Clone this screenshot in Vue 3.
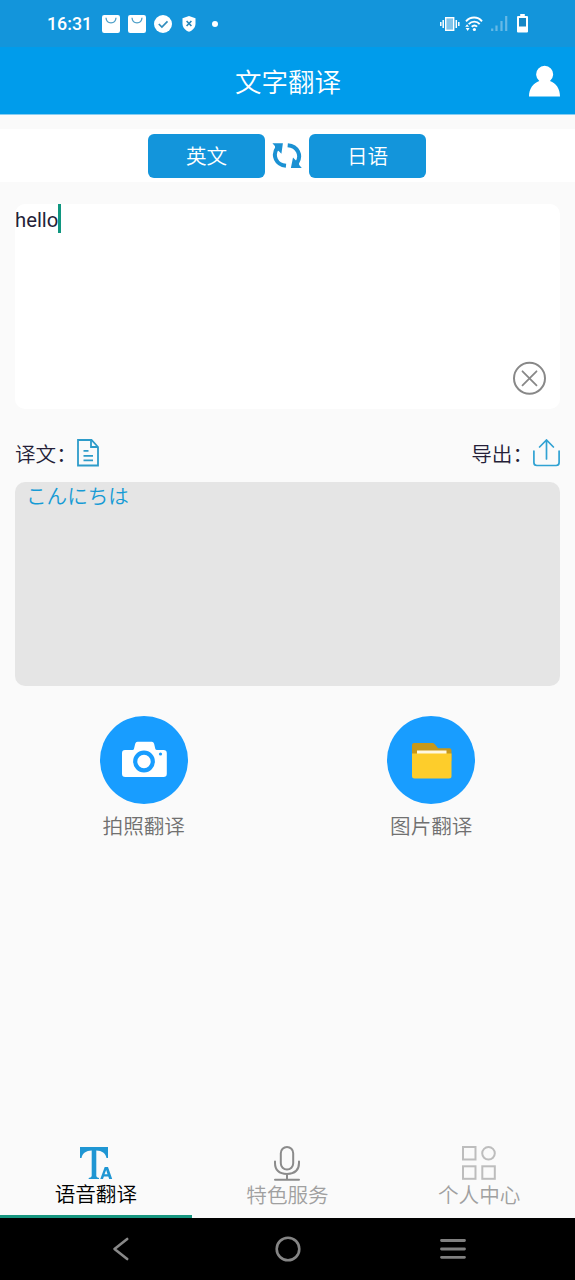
<script setup>
import { ref } from 'vue'

const source = ref('hello')
const result = ref('こんにちは')
const languages = ['英文', '日语']
</script>

<template>
  <main class="screen">
    <div class="status">
      <span class="time">16:31</span>
      <svg v-for="n in 2" :key="n" class="bag" width="18" height="18" viewBox="0 0 18 18">
        <rect width="18" height="18" rx="2.2" fill="#fff" />
        <path d="M4 2.800c.6 6.800 9.400 6.800 10 0" fill="none" stroke="#4d9fc8" stroke-width="1.300" />
      </svg>
      <svg class="check" width="18" height="18" viewBox="0 0 18 18">
        <circle cx="9" cy="9" r="9" fill="#fff" />
        <path d="M4.800 9l3.100 3 5.600-5.700" fill="none" stroke="#328dbd" stroke-width="1.700" />
      </svg>
      <svg class="shield" width="14" height="16" viewBox="0 0 14 16">
        <path d="M7 0l6.500 2.300v5.200c0 4-2.600 6.900-6.500 8.300C3.100 14.400.5 11.500.5 7.500V2.300z" fill="#fff" />
        <path d="M4.600 5l4.800 5M9.400 5l-4.800 5" stroke="#2485b8" stroke-width="1.600" />
      </svg>
      <i class="dot"></i>
      <span class="grow"></span>
      <svg class="vibrate" width="20" height="14" viewBox="0 0 20 14">
        <rect x="5.700" y=".7" width="8" height="12.600" fill="#80c3e9" stroke="#fff" stroke-width="1.400" />
        <path d="M3.200 3v8M16.300 3v8M.8 5v4M18.800 5v4" stroke="#fff" stroke-width="1.500" />
      </svg>
      <svg class="wifi" width="18" height="16" viewBox="0 0 18 16">
        <g fill="none" stroke="#fff" stroke-width="1.900">
          <path d="M1 5.300C5.500.3 12.800.3 17 5.300M3.700 8.100c3.200-3.300 8.100-3.300 11 0M6.700 10.700c1.600-1.500 3.900-1.500 5.400 0" />
        </g>
        <circle cx="9.400" cy="13.500" r="1.600" fill="#fff" />
        <path d="M.2 10.800l1.900-2.500 1.900 2.500zM.7 12l2 3 1.900-3z" fill="#fff" />
      </svg>
      <svg class="signal" width="17" height="16" viewBox="0 0 17 16">
        <path d="M1.200 12.500V15M5.500 9.500V15M10.500 5v10M15.200 0v15" stroke="#66b9e6" stroke-width="2.200" />
      </svg>
      <svg class="battery" width="11" height="19" viewBox="0 0 11 19">
        <path d="M3.200 0h4.600v2H10q1 0 1 1v14.500q0 1-1 1H1q-1 0-1-1V3q0-1 1-1h2.200z" fill="#fff" />
        <rect x="2" y="4" width="7" height="8.500" fill="#1687c5" />
      </svg>
    </div>

    <header class="header">
      <h1>文字翻译</h1>
      <svg class="person" width="32" height="32" viewBox="0 0 32 32">
        <path d="M0 31.500c0-8 4.300-13.500 10.300-15.600A8.500 8.500 0 1 1 21 15.900C27 18 31 23.500 31 31.500z" fill="#fff" />
      </svg>
    </header>

    <div class="languages">
      <button>{{ languages[0] }}</button>
      <svg width="30" height="28" viewBox="0 0 30 28">
        <g fill="none" stroke="#1b91d3" stroke-width="4">
          <path d="M14 23.800C3.900 22.800-.1 13.500 5.400 5.500" />
          <path d="M15.700 3.300C25.900 4.200 30 13.500 24.900 21.500" />
        </g>
        <path d="M.4 1.300h10.500L9.400 11.800 6.700 9 3.400 7.500 2.900 4zM29.800 25.900H18.900L21 15.500l2.700 2.700 3 1.600.5 3.200z" fill="#1b91d3" />
      </svg>
      <button>{{ languages[1] }}</button>
    </div>

    <section class="source">
      <span class="typed">{{ source }}</span><i class="caret"></i>
      <svg class="clear" width="34" height="34" viewBox="0 0 34 34" fill="none" stroke="#888">
        <circle cx="17.500" cy="17.300" r="15.500" stroke-width="2" />
        <path d="M10.500 10.300l14 14M24.500 10.300l-14 14" stroke-width="1.800" stroke-linecap="round" />
      </svg>
    </section>

    <div class="tools">
      <span>译文：</span>
      <svg class="document" width="22" height="28" viewBox="0 0 22 28" fill="none" stroke="#2d9bc9" stroke-width="1.800">
        <path d="M1 1h13.500L21 8v18.500H1z" />
        <path d="M14 1v7h7" />
        <path d="M6.500 11.800h5M6.500 16.800h9.500M6.500 21.300h9.500" />
      </svg>
      <span class="grow"></span>
      <span>导出：</span>
      <svg class="export" width="27" height="28" viewBox="0 0 27 28" fill="none" stroke="#30a2d3" stroke-width="1.700" stroke-linecap="round">
        <path d="M.9 12v11.500q0 3 3 3h19.200q3 0 3-3V12" />
        <path d="M13.500 20V1M6.600 8l6.900-7 6.900 7" />
      </svg>
    </div>

    <section class="result">{{ result }}</section>

    <div class="actions">
      <div class="action">
        <div class="disc">
          <svg width="88" height="88" viewBox="0 0 88 88">
            <path d="M25 34h7.500q1.200 0 1.500-1.200l1.200-5q.6-2 2.300-2h14.300q1.700 0 2.300 2l1.200 5Q55.600 34 57 34h6.500q3.300 0 3.300 3.300v20.400q0 3.300-3.300 3.300H25.300q-3.300 0-3.300-3.300V37.300Q22 34 25 34z" fill="#fff" />
            <circle cx="44" cy="45.500" r="8.800" fill="none" stroke="#189dff" stroke-width="4.200" />
            <circle cx="60.500" cy="38" r="1.600" fill="#189dff" />
          </svg>
        </div>
        <span>拍照翻译</span>
      </div>
      <div class="action">
        <div class="disc">
          <svg width="88" height="88" viewBox="0 0 88 88">
            <path d="M25 29q0-2 2-2h18.500q1.300 0 2.300 1.200l3.300 4h11.400q2 0 2 2V45H25z" fill="#c7981a" />
            <rect x="30" y="34.500" width="29.500" height="7" fill="#fff8e1" />
            <path d="M25 37.500h39.500v22.500q0 2.500-2.500 2.500H27.500Q25 62.500 25 60z" fill="#fdcd2b" />
          </svg>
        </div>
        <span>图片翻译</span>
      </div>
    </div>

    <nav class="tabs">
      <div class="tab active">
        <svg width="34" height="35" viewBox="0 0 34 35" fill="#1f96d3">
          <path d="M1 1h28v11h-1.500C26.500 7 23 4.800 17.300 4.500V30q0 1.700 2.700 2v1H9.700v-1q3-.3 3-2V4.500C7 4.800 3.500 7 2.500 12H1z" />
          <path fill-rule="evenodd" d="M21.300 33l4.400-12h3.300l4.200 12h-3l-.9-2.500h-4.400l-.9 2.500zM25.500 28.300h3L27.200 24z" />
        </svg>
        <span>语音翻译</span>
      </div>
      <div class="tab">
        <svg width="34" height="35" viewBox="0 0 34 35" fill="none" stroke="#8b8b8b" stroke-width="2">
          <rect x="10.800" y="1" width="12.400" height="22.500" rx="6.200" />
          <path d="M5 15.500v1.500q0 10.700 12 11 12-.3 12-11v-1.500M17 28v5.500M5 33.700h24" stroke-linecap="round" />
        </svg>
        <span>特色服务</span>
      </div>
      <div class="tab">
        <svg width="34" height="35" viewBox="0 0 34 35" fill="none" stroke="#bdbdbd" stroke-width="2">
          <rect x="1" y="1" width="12.500" height="12.500" />
          <circle cx="26.500" cy="7.300" r="6.300" />
          <rect x="1" y="20.300" width="12.500" height="12.500" />
          <rect x="20.300" y="20.300" width="12.500" height="12.500" />
        </svg>
        <span>个人中心</span>
      </div>
    </nav>

    <footer class="keys">
      <svg width="18" height="24" viewBox="0 0 18 24" fill="none" stroke="#888" stroke-width="2.600" stroke-linecap="round" stroke-linejoin="round">
        <path d="M15.200 2L2.500 12l12.700 10" />
      </svg>
      <svg class="home" width="26" height="26" viewBox="0 0 26 26" fill="none" stroke="#858585" stroke-width="2.600">
        <circle cx="13" cy="13" r="11.300" />
      </svg>
      <svg width="26" height="22" viewBox="0 0 26 22" stroke="#808080" stroke-width="2.800" stroke-linecap="round">
        <path d="M1.500 2.500h23M1.500 11h23M1.500 19.300h23" />
      </svg>
    </footer>
  </main>
</template>

<style>
body {
  margin: 0;
}
</style>

<style scoped>
.screen {
  display: flex;
  flex-direction: column;
  box-sizing: border-box;
  width: 575px;
  height: 1280px;
  overflow: hidden;
  background: #fafafa;
  color: #251f38;
  font-family: Roboto, "Noto Sans CJK SC", sans-serif;
  font-size: 20.6px;
  font-weight: 350;
}
svg {
  display: block;
  flex: none;
}
.grow {
  flex: 1;
}
.status {
  display: flex;
  align-items: center;
  height: 47px;
  box-sizing: border-box;
  padding: 0 47px;
  background: #1395db;
  color: #fff;
}
.time {
  width: 55px;
  font-size: 17.8px;
  font-weight: 500;
  line-height: 24px;
  padding-top: 1px;
}
.bag {
  margin-right: 8px;
}
.check {
  margin-right: 10px;
}
.dot {
  width: 6px;
  height: 6px;
  margin-left: 16px;
  border-radius: 50%;
  background: #fff;
}
.wifi {
  margin-left: 5px;
}
.signal {
  margin-left: 8px;
}
.battery {
  margin-left: 9px;
}
.header {
  display: grid;
  grid-template-columns: 1fr auto 1fr;
  align-items: center;
  box-sizing: border-box;
  height: 68px;
  padding: 1px 14px 0 15px;
  border-bottom: 1px solid #86cdf2;
  background: #009ceb;
  color: #fff;
}
.header h1 {
  grid-column: 2;
  margin: 0;
  padding-top: 4px;
  font-size: 26.500px;
  font-weight: 350;
  line-height: 40px;
}
.person {
  justify-self: end;
}
.languages {
  display: flex;
  align-items: center;
  justify-content: center;
  gap: 7px;
  box-sizing: border-box;
  height: 53px;
  margin-top: 14px;
  padding: 1px 1px 0 0;
  background: #fff;
}
.languages button {
  width: 117px;
  height: 44px;
  padding: 3px 0 0;
  border: 0;
  border-radius: 6px;
  background: #1395db;
  color: #fff;
  font: inherit;
  line-height: 41px;
}
.source {
  position: relative;
  display: flex;
  height: 205px;
  margin: 22px 15px 0;
  border-radius: 10px;
  background: #fff;
}
.typed {
  width: 43px;
  font-size: 20.3px;
  font-weight: 400;
  line-height: 32px;
}
.caret {
  width: 3px;
  height: 29px;
  background: #109680;
}
.clear {
  position: absolute;
  right: 14px;
  bottom: 14px;
}
.tools {
  display: flex;
  align-items: center;
  height: 28px;
  margin: 30px 15px 0;
  line-height: 28px;
}
.tools span {
  padding-top: 3px;
}
.result {
  box-sizing: border-box;
  height: 204px;
  margin: 15px 15px 0;
  padding-left: 11px;
  border-radius: 10px;
  background: #e5e5e5;
  color: #169bd5;
  font-family: Roboto, "Noto Sans CJK JP", sans-serif;
  line-height: 31px;
}
.actions {
  display: grid;
  grid-template-columns: 1fr 1fr;
  margin-top: 30px;
  color: #707070;
}
.action {
  display: flex;
  flex-direction: column;
  align-items: center;
}
.disc {
  width: 88px;
  height: 88px;
  border-radius: 50%;
  background: #189dff;
}
.action span {
  margin-top: 8px;
  line-height: 30px;
}
.tabs {
  display: grid;
  grid-template-columns: 1fr 1fr 1fr;
  height: 73px;
  margin-top: auto;
  color: #a0a0a0;
}
.tab {
  display: flex;
  flex-direction: column;
  align-items: center;
  box-sizing: border-box;
  padding-top: 1px;
}
.tab span {
  margin-top: 1px;
  line-height: 28px;
}
.tab.active {
  border-bottom: 3px solid #169680;
  color: #000;
}
.tab.active span {
  margin-top: 0;
}
.keys {
  display: flex;
  align-items: center;
  justify-content: space-between;
  box-sizing: border-box;
  height: 62px;
  padding: 0 109px 0 112px;
  background: #000;
}
.home {
  margin-left: 5px;
}
</style>
